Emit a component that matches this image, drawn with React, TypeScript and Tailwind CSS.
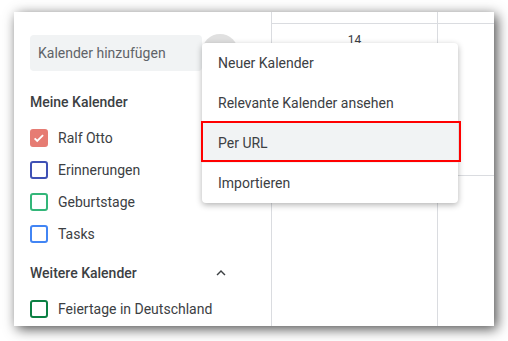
import React from 'react'

const calendars = [
  { name: 'Ralf Otto', color: '#e67c73', checked: true },
  { name: 'Erinnerungen', color: '#3f51b5', checked: false },
  { name: 'Geburtstage', color: '#33b679', checked: false },
  { name: 'Tasks', color: '#4285f4', checked: false },
]

const menuItems = ['Neuer Kalender', 'Relevante Kalender ansehen', 'Per URL', 'Importieren']

const Checkbox: React.FC<{ color: string; checked: boolean }> = ({ color, checked }) => (
  <span
    className="flex h-[18px] w-[18px] shrink-0 items-center justify-center rounded-[3px] border-2"
    style={{ borderColor: color, backgroundColor: checked ? color : 'transparent' }}
  >
    {checked && (
      <svg viewBox="0 0 24 24" className="h-[16px] w-[16px]" fill="none" stroke="white" strokeWidth={3.2}>
        <path d="M4.5 12.5l4.5 4.5 10-10" />
      </svg>
    )}
  </span>
)

const Row: React.FC<{ name: string; color: string; checked: boolean }> = ({ name, color, checked }) => (
  <div className="flex h-[32px] items-center gap-[10px]">
    <Checkbox color={color} checked={checked} />
    <span className="text-[14px] text-[#3c4043]">{name}</span>
  </div>
)

export default function App() {
  return (
    <div
      className="h-[341px] w-[508px] bg-white pl-[14px] pt-[12px]"
      style={{ fontFamily: 'Roboto, "Liberation Sans", sans-serif' }}
    >
      <div className="relative flex h-[314px] w-[480px] bg-white shadow-[3px_3px_12px_rgba(0,0,0,0.7)]">
        {/* Seitenleiste */}
        <div className="w-[257px] shrink-0 pl-[16px] pt-[23px]">
          <div className="flex h-[36px] w-[172px] items-center rounded-[4px] bg-[#f1f3f4] pl-[8px] text-[14px] text-[#5f6368]">
            Kalender hinzufügen
          </div>
          <div className="mt-[21px] flex h-[20px] items-center text-[14px] font-medium text-[#3c4043]">
            Meine Kalender
          </div>
          <div className="mt-[10px]">
            {calendars.map((c) => (
              <Row key={c.name} {...c} />
            ))}
          </div>
          <div className="mt-[13px] flex h-[20px] w-[200px] items-center justify-between text-[14px] font-medium text-[#3c4043]">
            <span>Weitere Kalender</span>
            <svg viewBox="0 0 24 24" className="h-[18px] w-[18px]" fill="#3c4043">
              <path d="M12 8l-6 6 1.41 1.41L12 10.83l4.59 4.58L18 14z" />
            </svg>
          </div>
          <div className="mt-[10px]">
            <Row name="Feiertage in Deutschland" color="#0b8043" checked={false} />
          </div>
        </div>

        {/* Kalenderraster */}
        <div className="flex flex-1">
          <div className="flex w-[166px] flex-col border-l border-[#dadce0]">
            <div className="h-[12px] border-b border-[#dadce0]" />
            <div className="flex h-[152px] justify-center border-b border-[#dadce0] pt-[7px] text-[12px] text-[#3c4043]">
              14
            </div>
          </div>
          <div className="flex flex-1 flex-col border-l border-[#dadce0]">
            <div className="h-[12px] border-b border-[#dadce0]" />
            <div className="h-[152px] border-b border-[#dadce0]" />
          </div>
        </div>

        {/* Plus-Knopf (teilweise verdeckt) */}
        <div className="absolute left-[188px] top-[22px] h-[36px] w-[36px] rounded-full bg-[#e0e0e0]" />

        {/* Menü */}
        <div className="absolute left-[188px] top-[31px] w-[256px] rounded-[4px] bg-white shadow-[0_2px_6px_rgba(0,0,0,0.3)]">
          {menuItems.map((item) => (
            <div
              key={item}
              className={`flex h-[40px] items-center pl-[16px] text-[14px] text-[#3c4043] ${
                item === 'Per URL' ? 'bg-[#f1f3f4]' : ''
              }`}
            >
              {item}
            </div>
          ))}
        </div>

        {/* Markierung */}
        <div className="absolute left-[187px] top-[109px] h-[41px] w-[260px] border-2 border-[#ff0000]" />
      </div>
    </div>
  )
}
